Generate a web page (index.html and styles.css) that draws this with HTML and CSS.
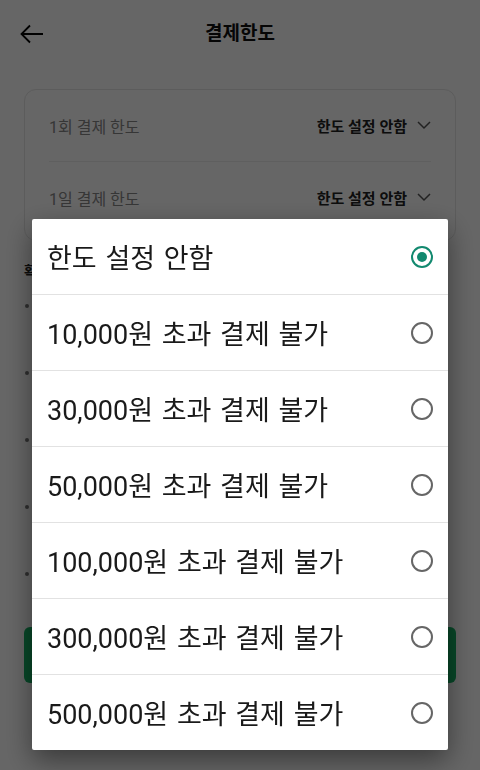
FILE: index.html
```html
<!DOCTYPE html>
<html lang="ko">
<head>
<meta charset="utf-8">
<link rel="stylesheet" href="styles.css">
</head>
<body>
<div class="page">
  <header class="topbar">
    <svg class="back" width="24" height="20" viewBox="0 0 24 20"><path d="M23 10H2M10 1.5L1.5 10L10 18.5" fill="none" stroke="#000" stroke-width="1.8"/></svg>
    <h1 class="title">결제한도</h1>
  </header>
  <section class="card">
    <div class="row">
      <span class="label">1회 결제 한도</span>
      <span class="value">한도 설정 안함 <svg width="14" height="9" viewBox="0 0 14 9"><path d="M1 1l6 6 6-6" fill="none" stroke="#555" stroke-width="1.5"/></svg></span>
    </div>
    <div class="row">
      <span class="label">1일 결제 한도</span>
      <span class="value">한도 설정 안함 <svg width="14" height="9" viewBox="0 0 14 9"><path d="M1 1l6 6 6-6" fill="none" stroke="#555" stroke-width="1.5"/></svg></span>
    </div>
  </section>
  <h2 class="notice-title">확인해 주세요</h2>
  <ul class="notice">
    <li>결제한도는 본인이 직접 설정한 금액을 기준으로 적용되며 한도 설정 변경 내용은 저장 즉시 반영됩니다.</li>
    <li>설정한 한도를 초과하는 결제는 진행되지 않으며, 정기결제 및 자동결제의 경우에도 동일하게 적용됩니다.</li>
    <li>1일 결제 한도는 매일 자정을 기준으로 초기화되며, 초기화 이후에는 설정한 한도가 다시 적용됩니다.</li>
    <li>일부 가맹점 및 결제 수단에서는 결제한도가 적용되지 않을 수 있으니 결제 전에 꼭 확인해 주세요.</li>
    <li>한도 변경 내역은 결제 설정 메뉴에서 언제든지 확인할 수 있으며, 다시 변경할 수 있습니다.</li>
  </ul>
  <button class="save">저장</button>
</div>
<div class="overlay">
  <div class="dialog">
    <div class="option"><span>한도 설정 안함</span><span class="radio on"></span></div>
    <div class="option"><span>10,000원 초과 결제 불가</span><span class="radio"></span></div>
    <div class="option"><span>30,000원 초과 결제 불가</span><span class="radio"></span></div>
    <div class="option"><span>50,000원 초과 결제 불가</span><span class="radio"></span></div>
    <div class="option"><span>100,000원 초과 결제 불가</span><span class="radio"></span></div>
    <div class="option"><span>300,000원 초과 결제 불가</span><span class="radio"></span></div>
    <div class="option"><span>500,000원 초과 결제 불가</span><span class="radio"></span></div>
  </div>
</div>
</body>
</html>
```

FILE: styles.css
```css
html, body {
  margin: 0;
  padding: 0;
  background: #fff;
  font-family: Roboto, "Noto Sans CJK KR", sans-serif;
}
.page {
  width: 480px;
  height: 770px;
  overflow: hidden;
  padding: 0 24px;
  box-sizing: border-box;
}
.topbar {
  height: 66px;
  display: flex;
  align-items: center;
  justify-content: center;
  position: relative;
}
.back {
  position: absolute;
  left: -4px;
  top: 24px;
}
.title {
  margin: 0 0 3px;
  font-size: 19px;
  font-weight: 700;
  color: #111;
}
.card {
  margin-top: 23px;
  border: 1px solid #e6e6e6;
  border-radius: 12px;
  padding: 0 24px;
  height: 150px;
}
.row {
  height: 71px;
  display: flex;
  align-items: center;
  justify-content: space-between;
  border-bottom: 1px solid #eee;
}
.row:last-child { border-bottom: none; }
.label {
  font-size: 16px;
  color: #888;
}
.value {
  font-size: 15px;
  font-weight: 700;
  color: #222;
  display: flex;
  align-items: center;
  gap: 10px;
}
.notice-title {
  margin: 20px 0 0;
  font-size: 14px;
  line-height: 20px;
  font-weight: 700;
  color: #222;
}
.notice {
  margin: 13px 0 0;
  padding: 0 0 0 16px;
  font-size: 14px;
  color: #777;
  line-height: 22px;
  word-break: keep-all;
}
.notice li {
  margin-bottom: 23px;
}
.notice li:last-child {
  margin-bottom: 0;
}
.save {
  display: block;
  width: 100%;
  height: 56px;
  margin-top: 21px;
  border: none;
  border-radius: 6px;
  background: #13b365;
  color: #fff;
  font-size: 17px;
  font-weight: 700;
  font-family: inherit;
}
.overlay {
  position: fixed;
  inset: 0;
  background: rgba(0, 0, 0, 0.6);
}
.dialog {
  position: absolute;
  left: 32px;
  top: 219px;
  width: 416px;
  background: #fff;
  border-radius: 2px;
  box-shadow: 0 10px 28px rgba(0, 0, 0, 0.45);
}
.option {
  height: 75px;
  display: flex;
  align-items: center;
  justify-content: space-between;
  padding: 0 15px 0 15px;
  border-bottom: 1px solid #e2e2e2;
  font-size: 27px;
  word-spacing: 2px;
  color: #1a1a1a;
}
.option:last-child { border-bottom: none; }
.radio {
  width: 18px;
  height: 18px;
  border: 2px solid #666;
  border-radius: 50%;
  box-sizing: content-box;
  display: flex;
  align-items: center;
  justify-content: center;
}
.radio.on {
  border-color: #12896f;
}
.radio.on::after {
  content: "";
  width: 10px;
  height: 10px;
  border-radius: 50%;
  background: #12896f;
}
```
